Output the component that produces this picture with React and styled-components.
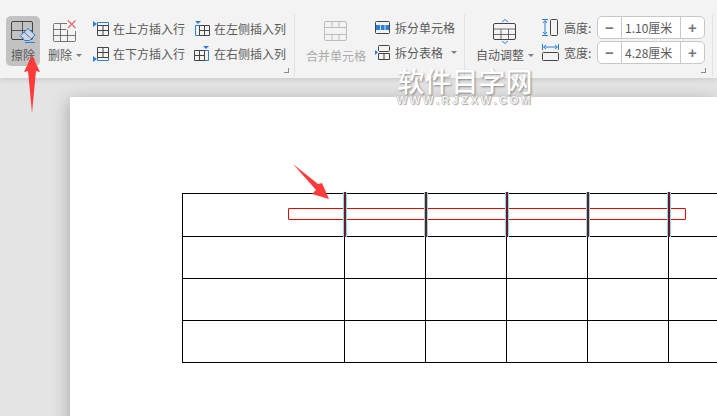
import React from 'react'
import styled, { createGlobalStyle } from 'styled-components'

const Global = createGlobalStyle`
  html, body { margin: 0; padding: 0; }
  body { width: 717px; height: 416px; overflow: hidden; background: #e4e4e4; font-family: "Noto Sans CJK SC", "Noto Sans", sans-serif; }
`

const Screen = styled.div`
  position: relative;
  width: 717px;
  height: 416px;
  overflow: hidden;
  display: flex;
  flex-direction: column;
`

const Ribbon = styled.div`
  position: relative;
  z-index: 2;
  flex: none;
  height: 78px;
  box-sizing: border-box;
  padding: 14px 0 2px 6px;
  display: flex;
  background: #f3f3f3;
  box-shadow: 0 1px 6px rgba(0,0,0,.14);
  color: #5a5a5a;
  font-size: 12px;
  line-height: 16px;
`

const Group = styled.div`
  position: relative;
  flex: none;
  width: ${p => p.$w}px;
  height: 62px;
  box-sizing: border-box;
  display: flex;
  border-right: 1px solid #e2e2e2;
`

const Corner = styled.span`
  position: absolute;
  right: ${p => p.$r || 5}px;
  bottom: 3px;
  width: 4px;
  height: 4px;
  border-right: 1px solid #8c8c8c;
  border-bottom: 1px solid #8c8c8c;
`

const BigButton = styled.div`
  flex: none;
  width: ${p => p.$w}px;
  height: 50px;
  margin: ${p => p.$m || '2px 0 0'};
  box-sizing: border-box;
  padding-top: ${p => p.$top || 4}px;
  display: flex;
  flex-direction: column;
  align-items: center;
  border-radius: 5px;
  background: ${p => p.$active ? '#c2c2c2' : 'transparent'};
  color: ${p => p.$muted ? '#ababab' : 'inherit'};
  svg { flex: none; display: block; }
`

const BigLabel = styled.div`
  margin-top: ${p => p.$gap}px;
  white-space: nowrap;
  display: flex;
  align-items: center;
`

const Caret = styled.i`
  display: inline-block;
  width: 0;
  height: 0;
  margin-left: ${p => p.$m || 4}px;
  border-left: 3px solid transparent;
  border-right: 3px solid transparent;
  border-top: 3px solid #808080;
`

const Rows = styled.div`
  flex: none;
  margin: ${p => p.$m};
  display: grid;
  grid-template-columns: ${p => p.$cols};
  grid-auto-rows: 25px;
`

const SmallItem = styled.div`
  display: flex;
  align-items: center;
  gap: 4px;
  white-space: nowrap;
  svg { flex: none; display: block; }
`

const SizeRows = styled.div`
  flex: none;
  margin: 2px 0 0 7px;
  display: grid;
  grid-auto-rows: 23px;
  row-gap: 2px;
`

const SizeRow = styled.div`
  display: flex;
  align-items: center;
  svg { flex: none; display: block; }
`

const SizeLabel = styled.span`
  width: 33px;
  margin-left: 5px;
`

const Stepper = styled.div`
  width: 108px;
  height: 23px;
  box-sizing: border-box;
  display: flex;
  align-items: center;
  background: #fff;
  border: 1px solid #c8c8c8;
  border-radius: 5px;
`

const StepButton = styled.span`
  flex: none;
  width: 23px;
  height: 21px;
  display: flex;
  align-items: center;
  justify-content: center;
  color: #777;
  font: bold 15px/21px "Liberation Sans", sans-serif;
`

const StepValue = styled.span`
  flex: 1;
  height: 21px;
  line-height: 21px;
  box-sizing: border-box;
  padding-left: 3px;
  border-left: 1px solid #c8c8c8;
  border-right: 1px solid #c8c8c8;
  white-space: nowrap;
`

const Canvas = styled.div`
  position: relative;
  flex: 1;
  padding: 19px 0 0 70px;
  background: #e4e4e4;
`

const Page = styled.div`
  height: 400px;
  box-sizing: border-box;
  padding: 96px 0 0 112px;
  background: #fff;
  box-shadow: -2px 3px 16px rgba(0,0,0,.24);
`

const Grid = styled.div`
  width: 560px;
  display: grid;
  grid-template-columns: 162px 81px 81px 81px 81px 74px;
  grid-template-rows: 43px 42px 42px 42px;
  border-top: 1px solid #000;
  border-left: 1px solid #000;
`

const Cell = styled.div`
  border-right: 1px solid #000;
  border-bottom: 1px solid #000;
`

const EraseBox = styled.div`
  position: absolute;
  left: 288px;
  top: 208px;
  width: 398px;
  height: 12px;
  box-sizing: border-box;
  border: 1px solid #f00000;
  border-radius: 1px;
  z-index: 1;
`

const Marker = styled.div`
  position: absolute;
  left: ${p => p.$x}px;
  top: 192px;
  width: 4px;
  height: 45px;
  z-index: 1;
  box-sizing: border-box;
  background: #7a0e3a;
  border-left: 1px solid #7fe8c8;
  border-right: 1px solid #7fe8c8;
`

const Overlay = styled.svg`
  position: absolute;
  left: 0;
  top: 0;
  z-index: 3;
  pointer-events: none;
`

const Watermark = styled.div`
  position: absolute;
  left: 396px;
  top: 65px;
  z-index: 4;
  width: 138px;
  text-align: center;
  color: #fff;
`

const WatermarkTitle = styled.div`
  font-size: 27px;
  line-height: 31px;
  font-weight: 500;
  white-space: nowrap;
  text-shadow: 1px 1px 2px rgba(0,0,0,.4);
`

const WatermarkUrl = styled.div`
  font: bold 11px/9px "Liberation Sans", sans-serif;
  letter-spacing: 2.8px;
  white-space: nowrap;
  color: #f4f4f4;
  text-shadow: 0 0 1px #888, 1px 1px 1px #aaa;
`

const INK = '#444'
const BLUE = '#2b7fd9'

const EraseIcon = () => (
  <svg width="26" height="24" viewBox="0 0 26 24" fill="none">
    <rect x="1.500" y="1.500" width="21" height="18" rx="1.500" stroke={INK} />
    <path d="M1.500 10.500h21M12.500 1.500v18" stroke={INK} strokeOpacity=".85" />
    <path d="M10.500 15.500l7.500-7 7 6.500-5.500 5.500h-5z" fill="#cfd6df" stroke={BLUE} />
    <path d="M14 12l6.500 6M15 22.500h10" stroke={BLUE} />
  </svg>
)

const DeleteIcon = () => (
  <svg width="24" height="24" viewBox="0 0 24 24" fill="none">
    <path d="M14 3.500H1.500a1 1 0 0 0-1 1v16a1 1 0 0 0 1 1h20a1 1 0 0 0 1-1V11M.5 9.500h13M.5 15.500h22M7.500 4v17M14.500 10v11" stroke={INK} strokeOpacity=".7" />
    <path d="M15 .5l7.500 7.500M22.500 .5L15 8" stroke="#e26b6b" strokeWidth="1.300" />
  </svg>
)

// kind says where the blue row or column of the table sits
const InsertIcon = ({ kind }) => {
  const paths = {
    above: <><path d="M0 0l4 3-4 3z" fill={BLUE} /><path d="M4.500 1.500h11v3h-11z" stroke={BLUE} /><path d="M4.500 4.500h11v10h-11zM4.500 9.500h11M10 4.500v10" stroke={INK} /></>,
    below: <><path d="M0 10l4 3-4 3z" fill={BLUE} /><path d="M4.500 11.500h11v3h-11z" stroke={BLUE} /><path d="M4.500 1.500h11v10h-11zM4.500 6.500h11M10 1.500v10" stroke={INK} /></>,
    left: <><path d="M1 0h6L4 3z" fill={BLUE} /><path d="M1.500 4.500h4v10h-4z" stroke={BLUE} /><path d="M5.500 4.500h10v10h-10zM10.500 4.500v10M5.500 9.500h10" stroke={INK} /></>,
    right: <><path d="M9 0h6l-3 3z" fill={BLUE} /><path d="M10.500 4.500h4v10h-4z" stroke={BLUE} /><path d="M.5 4.500h10v10H.5zM5.500 4.500v10M.5 9.500h10" stroke={INK} /></>,
  }
  return <svg width="16" height="16" viewBox="0 0 16 16" fill="none">{paths[kind]}</svg>
}

const MergeIcon = () => (
  <svg width="24" height="20" viewBox="0 0 24 20" fill="none" stroke="#bcbcbc">
    <rect x=".5" y=".5" width="22" height="19" rx="1.500" />
    <path d="M.5 6.500h22M.5 13.500h22M8 1v5M15 1v5M8 14v5M15 14v5" />
  </svg>
)

const SplitCellIcon = () => (
  <svg width="16" height="16" viewBox="0 0 16 16" fill="none">
    <rect x=".5" y="1.500" width="14" height="12" rx="1" stroke={INK} />
    <path d="M1 5h13v5H1z" fill={BLUE} />
    <path d="M5.500 5v5M10 5v5" stroke="#cfe2f6" />
  </svg>
)

const SplitTableIcon = () => (
  <svg width="16" height="16" viewBox="0 0 16 16" fill="none">
    <path d="M0 5l3 2.500L0 10z" fill={BLUE} />
    <rect x="3.500" y=".5" width="11" height="6" rx="1" stroke={INK} />
    <path d="M3.500 8.500h11v6h-11zM9 8.500v6" stroke={INK} />
  </svg>
)

const AutoFitIcon = () => (
  <svg width="24" height="25" viewBox="0 0 24 25" fill="none">
    <path d="M9 3l3-2.500L15 3M9 22l3 2.500L15 22" stroke={BLUE} />
    <rect x=".5" y="4.500" width="22" height="16" rx="1.500" stroke={INK} />
    <path d="M.5 10h22M.5 15.500h22M8 10v10.500M15.500 10v10.500" stroke={INK} strokeOpacity=".75" />
  </svg>
)

const HeightIcon = () => (
  <svg width="17" height="18" viewBox="0 0 17 18" fill="none">
    <path d="M0 .5h6M0 16.500h6M3 2v13M1 4l2-2.500L5 4M1 13l2 2.500L5 13" stroke={BLUE} />
    <rect x="8.500" y=".5" width="7" height="16" rx="1" stroke={INK} />
  </svg>
)

const WidthIcon = () => (
  <svg width="17" height="18" viewBox="0 0 17 18" fill="none">
    <path d="M.5 0v6M16.500 0v6M2 3h13M4 1L1.500 3 4 5M13 1l2.500 2L13 5" stroke={BLUE} />
    <rect x=".5" y="8.500" width="16" height="8" rx="1" stroke={INK} />
  </svg>
)

const rowCells = Array.from({ length: 24 })
const markerColumns = [343, 424, 505, 586, 667]

export default function App() {
  return (
    <Screen>
      <Global />
      <Ribbon>
        <Group $w={289}>
          <BigButton $w={34} $active>
            <EraseIcon />
            <BigLabel $gap={3}>擦除</BigLabel>
          </BigButton>
          <BigButton $w={40} $m="2px 0 0 5px">
            <DeleteIcon />
            <BigLabel $gap={3}>删除<Caret /></BigLabel>
          </BigButton>
          <Rows $m="2px 0 0 8px" $cols="101px 96px">
            <SmallItem><InsertIcon kind="above" />在上方插入行</SmallItem>
            <SmallItem><InsertIcon kind="left" />在左侧插入列</SmallItem>
            <SmallItem><InsertIcon kind="below" />在下方插入行</SmallItem>
            <SmallItem><InsertIcon kind="right" />在右侧插入列</SmallItem>
          </Rows>
          <Corner />
        </Group>
        <Group $w={170}>
          <BigButton $w={60} $m="2px 0 0 11px" $muted $top={5}>
            <MergeIcon />
            <BigLabel $gap={7}>合并单元格</BigLabel>
          </BigButton>
          <Rows $m="1px 0 0 9px" $cols="88px">
            <SmallItem><SplitCellIcon />拆分单元格</SmallItem>
            <SmallItem><SplitTableIcon />拆分表格<Caret $m={4} /></SmallItem>
          </Rows>
        </Group>
        <Group $w={248}>
          <BigButton $w={60} $m="2px 0 0 10px" $top={3}>
            <AutoFitIcon />
            <BigLabel $gap={3}>自动调整<Caret /></BigLabel>
          </BigButton>
          <SizeRows>
            <SizeRow>
              <HeightIcon />
              <SizeLabel>高度:</SizeLabel>
              <Stepper><StepButton>−</StepButton><StepValue>1.10厘米</StepValue><StepButton>+</StepButton></Stepper>
            </SizeRow>
            <SizeRow>
              <WidthIcon />
              <SizeLabel>宽度:</SizeLabel>
              <Stepper><StepButton>−</StepButton><StepValue>4.28厘米</StepValue><StepButton>+</StepButton></Stepper>
            </SizeRow>
          </SizeRows>
          <Corner $r={6} />
        </Group>
      </Ribbon>
      <Canvas>
        <Page>
          <Grid>{rowCells.map((_, i) => <Cell key={i} />)}</Grid>
        </Page>
      </Canvas>
      <EraseBox />
      {markerColumns.map(x => <Marker key={x} $x={x} />)}
      <Overlay width="717" height="416" viewBox="0 0 717 416">
        <path d="M32 55L40 72 36 71 32 113 28 71 24 72z" fill="#ff3b3b" />
        <path d="M293 164L318 184 322 183 329 199 312 194 316 190z" fill="#ff3b3b" />
      </Overlay>
      <Watermark>
        <WatermarkTitle>软件目字网</WatermarkTitle>
        <WatermarkUrl>WWW.RJZXW.COM</WatermarkUrl>
      </Watermark>
    </Screen>
  )
}
